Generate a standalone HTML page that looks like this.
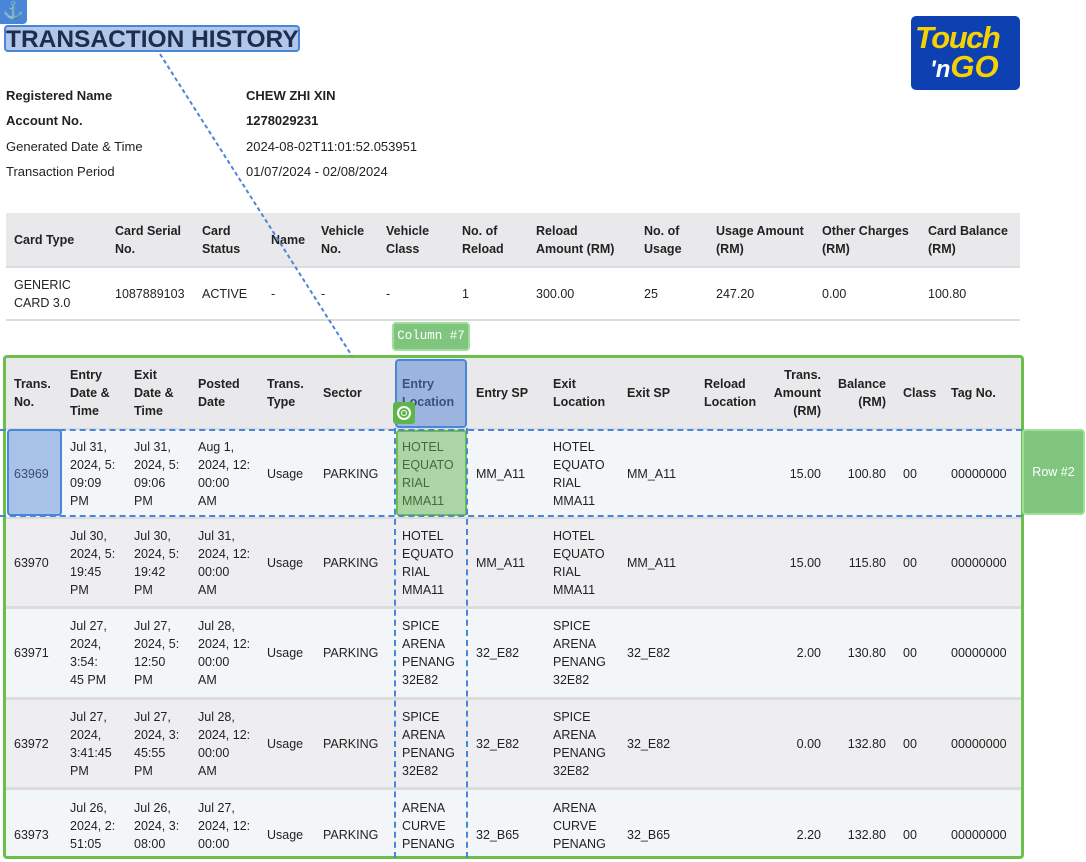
<!DOCTYPE html>
<html style="overflow:hidden;width:1086px;height:862px"><head><meta charset="utf-8"><style>
*{margin:0;padding:0;box-sizing:border-box}
body{width:1086px;height:862px;overflow:hidden;background:#fff;font-family:"Liberation Sans",sans-serif;font-size:12.5px;color:#222;position:relative}
.a{position:absolute}
.r{position:absolute;left:6px;width:1014px;overflow:hidden}
.c{position:absolute;top:0;bottom:0;display:flex;align-items:center;line-height:18px;white-space:nowrap}
.rt{justify-content:flex-end;text-align:right}
b{font-weight:bold}
.hd .c{font-weight:bold}
</style></head><body>

<div class="a" style="left:4px;top:25px;width:296px;height:27px;background:rgba(80,130,210,0.45);border:2px solid #4a86d8;border-radius:4px"></div>
<div class="a" style="left:6px;top:26px;font-size:24.5px;font-weight:bold;color:#1e2d4a;z-index:2">TRANSACTION HISTORY</div>
<div class="a" style="left:0;top:0;width:27px;height:24px;background:#4a86d8;border-radius:0 0 4px 0;color:#fff;font-size:17px;text-align:center;line-height:22px">⚓</div>

<div class="a" style="left:911px;top:16px;width:109px;height:74px;background:#0d40b0;border-radius:5px"></div>
<div class="a" style="left:915px;top:22px;font-size:31px;font-weight:bold;font-style:italic;color:#f6d200;letter-spacing:-1.5px;line-height:32px">Touch</div>
<div class="a" style="left:930px;top:51px;font-size:31px;font-weight:bold;font-style:italic;color:#f6d200;line-height:32px"><span style="color:#fff;font-size:24px">'n</span>GO</div>

<div class="a" style="left:6px;top:83px;line-height:25.3px;font-size:13px"><b>Registered Name</b><br><b>Account No.</b><br>Generated Date &amp; Time<br>Transaction Period</div>
<div class="a" style="left:246px;top:83px;line-height:25.3px;font-size:13px"><b>CHEW ZHI XIN</b><br><b>1278029231</b><br>2024-08-02T11:01:52.053951<br>01/07/2024 - 02/08/2024</div>

<!-- card table -->
<div class="r hd" style="top:213px;height:53px;background:#e9e9eb">
<div class="c" style="left:8px">Card Type</div>
<div class="c" style="left:109px">Card Serial<br>No.</div>
<div class="c" style="left:196px">Card<br>Status</div>
<div class="c" style="left:265px">Name</div>
<div class="c" style="left:315px">Vehicle<br>No.</div>
<div class="c" style="left:380px">Vehicle<br>Class</div>
<div class="c" style="left:456px">No. of<br>Reload</div>
<div class="c" style="left:530px">Reload<br>Amount (RM)</div>
<div class="c" style="left:638px">No. of<br>Usage</div>
<div class="c" style="left:710px">Usage Amount<br>(RM)</div>
<div class="c" style="left:816px">Other Charges<br>(RM)</div>
<div class="c" style="left:922px">Card Balance<br>(RM)</div>
</div>
<div class="r" style="top:266px;height:2px;background:#dcdcde"></div>
<div class="r" style="top:268px;height:51px">
<div class="c" style="left:8px">GENERIC<br>CARD 3.0</div>
<div class="c" style="left:109px">1087889103</div>
<div class="c" style="left:196px">ACTIVE</div>
<div class="c" style="left:265px">-</div>
<div class="c" style="left:315px">-</div>
<div class="c" style="left:380px">-</div>
<div class="c" style="left:456px">1</div>
<div class="c" style="left:530px">300.00</div>
<div class="c" style="left:638px">25</div>
<div class="c" style="left:710px">247.20</div>
<div class="c" style="left:816px">0.00</div>
<div class="c" style="left:922px">100.80</div>
</div>
<div class="r" style="top:319px;height:2px;background:#dcdcde"></div>

<!-- transaction table -->
<div class="r hd" style="top:358px;height:70px;background:#e9e9eb;left:6px;width:1016px">
<div class="c" style="left:8px">Trans.<br>No.</div>
<div class="c" style="left:64px">Entry<br>Date &amp;<br>Time</div>
<div class="c" style="left:128px">Exit<br>Date &amp;<br>Time</div>
<div class="c" style="left:192px">Posted<br>Date</div>
<div class="c" style="left:261px">Trans.<br>Type</div>
<div class="c" style="left:317px">Sector</div>
<div class="c" style="left:396px">Entry<br>Location</div>
<div class="c" style="left:470px">Entry SP</div>
<div class="c" style="left:547px">Exit<br>Location</div>
<div class="c" style="left:621px">Exit SP</div>
<div class="c" style="left:698px">Reload<br>Location</div>
<div class="c rt" style="left:740px;width:75px">Trans.<br>Amount<br>(RM)</div>
<div class="c rt" style="left:810px;width:70px">Balance<br>(RM)</div>
<div class="c" style="left:897px">Class</div>
<div class="c" style="left:945px">Tag No.</div>
</div>

<div class="r" style="top:428px;height:2px;background:#dcdcde;width:1016px"></div>
<div class="r" style="top:430px;height:87px;background:#f3f6f9;width:1016px">
<div class="c" style="left:8px">63969</div>
<div class="c" style="left:64px">Jul 31,<br>2024, 5:<br>09:09<br>PM</div>
<div class="c" style="left:128px">Jul 31,<br>2024, 5:<br>09:06<br>PM</div>
<div class="c" style="left:192px">Aug 1,<br>2024, 12:<br>00:00<br>AM</div>
<div class="c" style="left:261px">Usage</div><div class="c" style="left:317px">PARKING</div>
<div class="c" style="left:396px">HOTEL<br>EQUATO<br>RIAL<br>MMA11</div>
<div class="c" style="left:470px">MM_A11</div>
<div class="c" style="left:547px">HOTEL<br>EQUATO<br>RIAL<br>MMA11</div>
<div class="c" style="left:621px">MM_A11</div>
<div class="c rt" style="left:740px;width:75px">15.00</div>
<div class="c rt" style="left:810px;width:70px">100.80</div>
<div class="c" style="left:897px">00</div><div class="c" style="left:945px">00000000</div>
</div>
<div class="r" style="top:517px;height:2px;background:#dcdcde;width:1016px"></div>
<div class="r" style="top:519px;height:87px;background:#eeeef0;width:1016px">
<div class="c" style="left:8px">63970</div>
<div class="c" style="left:64px">Jul 30,<br>2024, 5:<br>19:45<br>PM</div>
<div class="c" style="left:128px">Jul 30,<br>2024, 5:<br>19:42<br>PM</div>
<div class="c" style="left:192px">Jul 31,<br>2024, 12:<br>00:00<br>AM</div>
<div class="c" style="left:261px">Usage</div><div class="c" style="left:317px">PARKING</div>
<div class="c" style="left:396px">HOTEL<br>EQUATO<br>RIAL<br>MMA11</div>
<div class="c" style="left:470px">MM_A11</div>
<div class="c" style="left:547px">HOTEL<br>EQUATO<br>RIAL<br>MMA11</div>
<div class="c" style="left:621px">MM_A11</div>
<div class="c rt" style="left:740px;width:75px">15.00</div>
<div class="c rt" style="left:810px;width:70px">115.80</div>
<div class="c" style="left:897px">00</div><div class="c" style="left:945px">00000000</div>
</div>
<div class="r" style="top:606px;height:3px;background:#dcdcde;width:1016px"></div>
<div class="r" style="top:609px;height:88px;background:#f3f6f9;width:1016px">
<div class="c" style="left:8px">63971</div>
<div class="c" style="left:64px">Jul 27,<br>2024,<br>3:54:<br>45 PM</div>
<div class="c" style="left:128px">Jul 27,<br>2024, 5:<br>12:50<br>PM</div>
<div class="c" style="left:192px">Jul 28,<br>2024, 12:<br>00:00<br>AM</div>
<div class="c" style="left:261px">Usage</div><div class="c" style="left:317px">PARKING</div>
<div class="c" style="left:396px">SPICE<br>ARENA<br>PENANG<br>32E82</div>
<div class="c" style="left:470px">32_E82</div>
<div class="c" style="left:547px">SPICE<br>ARENA<br>PENANG<br>32E82</div>
<div class="c" style="left:621px">32_E82</div>
<div class="c rt" style="left:740px;width:75px">2.00</div>
<div class="c rt" style="left:810px;width:70px">130.80</div>
<div class="c" style="left:897px">00</div><div class="c" style="left:945px">00000000</div>
</div>
<div class="r" style="top:697px;height:3px;background:#dcdcde;width:1016px"></div>
<div class="r" style="top:700px;height:87px;background:#eeeef0;width:1016px">
<div class="c" style="left:8px">63972</div>
<div class="c" style="left:64px">Jul 27,<br>2024,<br>3:41:45<br>PM</div>
<div class="c" style="left:128px">Jul 27,<br>2024, 3:<br>45:55<br>PM</div>
<div class="c" style="left:192px">Jul 28,<br>2024, 12:<br>00:00<br>AM</div>
<div class="c" style="left:261px">Usage</div><div class="c" style="left:317px">PARKING</div>
<div class="c" style="left:396px">SPICE<br>ARENA<br>PENANG<br>32E82</div>
<div class="c" style="left:470px">32_E82</div>
<div class="c" style="left:547px">SPICE<br>ARENA<br>PENANG<br>32E82</div>
<div class="c" style="left:621px">32_E82</div>
<div class="c rt" style="left:740px;width:75px">0.00</div>
<div class="c rt" style="left:810px;width:70px">132.80</div>
<div class="c" style="left:897px">00</div><div class="c" style="left:945px">00000000</div>
</div>
<div class="r" style="top:787px;height:3px;background:#dcdcde;width:1016px"></div>
<div class="r" style="top:790px;height:68px;background:#f3f6f9;width:1016px">
<div style="position:absolute;left:0;top:0;width:1016px;height:89px">
<div class="c" style="left:8px">63973</div>
<div class="c" style="left:64px">Jul 26,<br>2024, 2:<br>51:05<br>PM</div>
<div class="c" style="left:128px">Jul 26,<br>2024, 3:<br>08:00<br>PM</div>
<div class="c" style="left:192px">Jul 27,<br>2024, 12:<br>00:00<br>AM</div>
<div class="c" style="left:261px">Usage</div><div class="c" style="left:317px">PARKING</div>
<div class="c" style="left:396px">ARENA<br>CURVE<br>PENANG<br>32B65</div>
<div class="c" style="left:470px">32_B65</div>
<div class="c" style="left:547px">ARENA<br>CURVE<br>PENANG<br>32B65</div>
<div class="c" style="left:621px">32_B65</div>
<div class="c rt" style="left:740px;width:75px">2.20</div>
<div class="c rt" style="left:810px;width:70px">132.80</div>
<div class="c" style="left:897px">00</div><div class="c" style="left:945px">00000000</div>
</div>
</div>

<!-- overlays -->
<div class="a" style="left:3px;top:355px;width:1021px;height:504px;border:3px solid #6cc04a;border-radius:4px"></div>
<div class="a" style="left:395px;top:359px;width:72px;height:69px;background:rgba(80,130,210,0.5);border:2px solid #4a86d8;border-radius:4px"></div>
<div class="a" style="left:396px;top:430px;width:71px;height:86px;background:rgba(100,180,80,0.5);border:2px solid #6cc04a;border-radius:3px"></div>
<div class="a" style="left:7px;top:429px;width:55px;height:87px;background:rgba(80,130,210,0.45);border:2px solid #4a86d8;border-radius:4px"></div>
<div class="a" style="left:0;top:429px;width:1022px;border-top:2px dashed #4a86d8"></div>
<div class="a" style="left:0;top:515px;width:1022px;border-top:2px dashed #4a86d8"></div>
<div class="a" style="left:394px;top:428px;height:430px;border-left:2px dashed #4a86d8"></div>
<div class="a" style="left:466px;top:428px;height:430px;border-left:2px dashed #4a86d8"></div>
<div class="a" style="left:393px;top:402px;width:22px;height:22px;background:#5fb54a;border-radius:3px"></div>
<div class="a" style="left:397px;top:406px;width:14px;height:14px;border:2px solid #fff;border-radius:50%"></div>
<div class="a" style="left:401px;top:410px;width:6px;height:6px;border:1.5px solid #fff;border-radius:50%"></div>
<div class="a" style="left:392px;top:322px;width:78px;height:29px;background:#80c57d;border:2px solid #9ee09a;border-radius:4px;color:#fff;font-family:'Liberation Mono',monospace;font-size:12.5px;text-align:center;line-height:25px">Column #7</div>
<div class="a" style="left:1022px;top:429px;width:63px;height:86px;background:#80c57d;border:2px solid #9ee09a;border-radius:4px;color:#fff;font-family:'Liberation Sans',sans-serif;font-size:12.5px;text-align:center;line-height:82px">Row #2</div>
<svg class="a" style="left:0;top:0" width="1086" height="862"><line x1="160" y1="54" x2="352" y2="356" stroke="#4a86d8" stroke-width="2" stroke-dasharray="4,3"/></svg>
</body></html>
